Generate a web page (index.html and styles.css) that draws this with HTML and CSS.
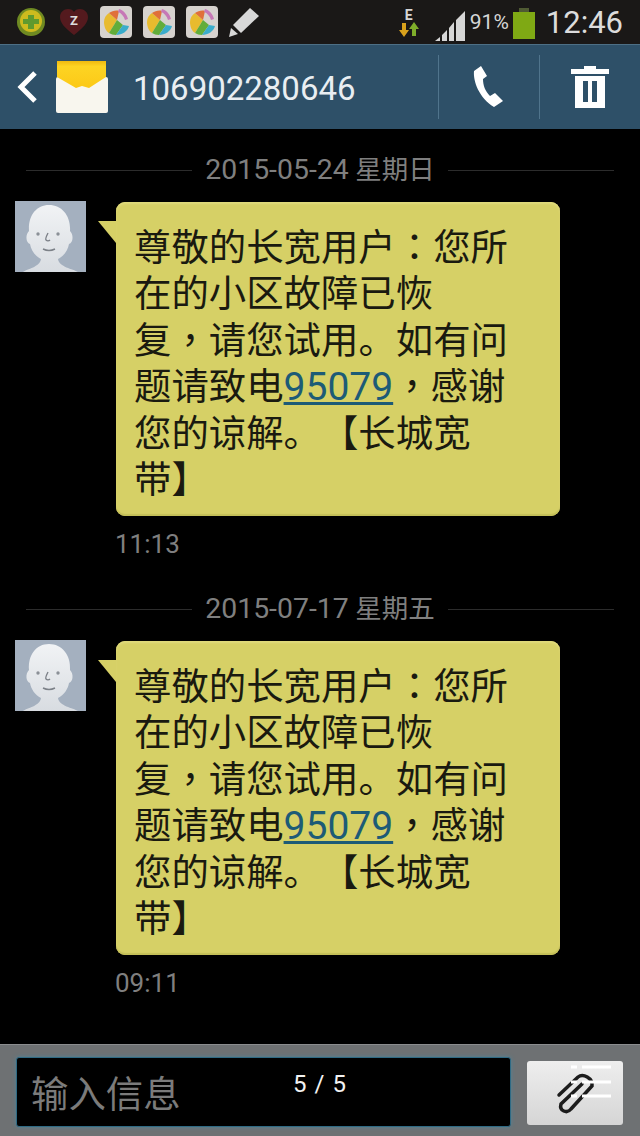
FILE: index.html
```html
<!DOCTYPE html>
<html lang="zh-CN">
<head>
<meta charset="UTF-8">
<title>106902280646</title>
<link rel="stylesheet" href="styles.css">
</head>
<body>
<div class="phone">

  <!-- status bar -->
  <div class="status-bar">
    <div class="notify-icons">
      <svg class="ico-plus" width="30" height="30" viewBox="0 0 30 30"><circle cx="15" cy="15" r="14" fill="#6f8a22"/><circle cx="15" cy="14" r="11" fill="#cdbb1e"/><path d="M12 8h6v4h5v5h-5v5h-6v-5H7v-5h5z" fill="#5f9a2e"/></svg>
      <svg class="ico-heart" width="30" height="28" viewBox="0 0 30 28"><path d="M15 27C6 20 1 15 1 9c0-5 4-8 8-8 3 0 5 1 6 3 1-2 3-3 6-3 4 0 8 3 8 8 0 6-5 11-14 18z" fill="#541a1e"/><text x="15" y="17" class="heart-z">Z</text></svg>
      <svg class="ico-app" width="32" height="32" viewBox="0 0 32 32"><use href="#appicon"/></svg>
      <svg class="ico-app" width="32" height="32" viewBox="0 0 32 32"><use href="#appicon"/></svg>
      <svg class="ico-app" width="32" height="32" viewBox="0 0 32 32"><use href="#appicon"/></svg>
      <svg class="ico-pen" width="30" height="30" viewBox="0 0 30 30"><path d="M21 1l9 8-18 17-8-8z" fill="#d8d8d8"/><path d="M2 21l7 6-9 3z" fill="#d8d8d8"/></svg>
    </div>
    <div class="status-right">
      <div class="net-type">
        <span class="net-e">E</span>
        <svg width="20" height="15" viewBox="0 0 20 15"><path d="M3 1h4v7h3l-5 7-5-7h3z" fill="#d9a21c"/><path d="M13 14h4V7h3l-5-7-5 7h3z" fill="#7fae2a"/></svg>
      </div>
      <svg class="signal" width="30" height="30" viewBox="0 0 30 30"><path d="M0 30l5-4v4zM7 24l5-5v11H7zM14 17l5-6v19h-5zM21 9l9-9v30h-9z" fill="#d6d6d6"/></svg>
      <span class="pct">91%</span>
      <div class="battery"><div class="battery-cap"></div><div class="battery-body"></div></div>
      <span class="clock">12:46</span>
    </div>
  </div>

  <!-- action bar -->
  <div class="action-bar">
    <svg class="back" width="20" height="34" viewBox="0 0 20 34"><path d="M18 3L4 17l14 14" fill="none" stroke="#fff" stroke-width="5"/></svg>
    <svg class="envelope" width="52" height="52" viewBox="0 0 52 52">
      <defs><linearGradient id="flap" x1="0" y1="0" x2="0" y2="1"><stop offset="0" stop-color="#f0b90f"/><stop offset="0.2" stop-color="#fdd423"/><stop offset="1" stop-color="#fcc917"/></linearGradient></defs>
      <rect x="0" y="16" width="52" height="36" rx="2" fill="#f8f6ee"/>
      <path d="M1 16V0h49v16L33 27l-7-2-6 2z" fill="url(#flap)"/>
    </svg>
    <div class="contact">106902280646</div>
    <div class="action-btn">
      <svg width="32" height="42" viewBox="0 0 32 42"><path d="M8 0L1 5c-1 10 5 27 20 36l9-6-8-8-5 3C12 25 10 19 10 13l4-3z" fill="#fff"/></svg>
    </div>
    <div class="action-btn">
      <svg width="38" height="42" viewBox="0 0 38 42"><path d="M13 0h12v3h13v5H0V3h13z" fill="#fff"/><path d="M4 10h30v32H4zM12 15v21h5V15zM21 15v21h5V15z" fill="#fff" fill-rule="evenodd"/></svg>
    </div>
  </div>

  <!-- messages -->
  <div class="thread">
    <div class="date-row"><span class="date-line"></span><span class="date-text"><span class="date-num">2015-05-24</span> 星期日</span><span class="date-line"></span></div>
    <div class="msg">
      <svg class="avatar" width="71" height="71" viewBox="0 0 71 71"><use href="#face"/></svg>
      <div class="bubble">
        <span class="tail"></span>
        尊敬的长宽用户<span class="mid" lang="zh-TW">：</span>您所<br>在的小区故障已恢<br>复<span class="mid" lang="zh-TW">，</span>请您试用。如有问<br>题请致电<a class="tel">95079</a><span class="mid" lang="zh-TW">，</span>感谢<br>您的谅解。【长城宽<br>带】
      </div>
    </div>
    <div class="msg-time">11:13</div>

    <div class="date-row"><span class="date-line"></span><span class="date-text"><span class="date-num">2015-07-17</span> 星期五</span><span class="date-line"></span></div>
    <div class="msg">
      <svg class="avatar" width="71" height="71" viewBox="0 0 71 71"><use href="#face"/></svg>
      <div class="bubble">
        <span class="tail"></span>
        尊敬的长宽用户<span class="mid" lang="zh-TW">：</span>您所<br>在的小区故障已恢<br>复<span class="mid" lang="zh-TW">，</span>请您试用。如有问<br>题请致电<a class="tel">95079</a><span class="mid" lang="zh-TW">，</span>感谢<br>您的谅解。【长城宽<br>带】
      </div>
    </div>
    <div class="msg-time">09:11</div>
  </div>

  <!-- input -->
  <div class="compose">
    <div class="input-box">输入信息</div>
    <div class="attach">
      <svg width="96" height="64" viewBox="0 0 96 64"><path d="M32 34L51 16c5-4 15 1 14 9L44 48c-4 5-12 2-10-5l21-20" fill="none" stroke="#1c1c1c" stroke-width="3.5" stroke-linecap="round"/><path d="M44 6h6M55 6h29M44 21h6M55 21h29M44 35h6M55 35h29" stroke="#fff" stroke-width="3"/></svg>
    </div>
    <div class="page-count">5 / 5</div>
  </div>
</div>

<!-- shared icons -->
<svg class="defs" width="0" height="0">
  <defs>
    <g id="appicon">
      <rect width="32" height="32" rx="4" fill="#d6d2ce"/>
      <path d="M4 16C4 12 6 9 9 7l8 7-8 13c-3-2-5-6-5-11z" fill="#e8bb2e"/>
      <path d="M9 7c3-2 7-3 10-2l-2 9z" fill="#e0703a"/>
      <path d="M9 27l8-13 6 5-7 10c-3 0-5-1-7-2z" fill="#62ad3a"/>
      <path d="M16 29l7-10 6 1c-1 5-7 9-13 9z" fill="#3aaccb"/>
      <path d="M19 3c4 1 8 5 9 10l-3 1c-1-4-4-7-7-8z" fill="#c678b6"/>
    </g>
    <linearGradient id="faceShade" x1="0" y1="0" x2="0" y2="1">
      <stop offset="0" stop-color="#f1f3f5"/>
      <stop offset="1" stop-color="#d8dce1"/>
    </linearGradient>
    <g id="face">
      <rect width="71" height="71" fill="#a4b0bf"/>
      <path d="M8 71c4-3 17-5 18-13-6-3-10-9-11-15-4-1-5-9-1-13C13 15 21 4 34 4s22 11 21 26c4 4 3 12-1 13-1 6-5 12-11 15 1 8 15 10 20 13z" fill="url(#faceShade)"/>
      <circle cx="23" cy="33" r="1.7" fill="#8b9097"/>
      <circle cx="43" cy="33" r="1.7" fill="#8b9097"/>
      <path d="M33 32c-2 4-3 6-2 7s3 1 4 0M28 48c4 2 8 2 12 0" fill="none" stroke="#7c8188" stroke-width="1.4"/>
    </g>
  </defs>
</svg>
</body>
</html>
```

FILE: styles.css
```css
* {
  box-sizing: border-box;
}
body {
  margin: 0;
  background: #000;
  font-family: "Roboto", "Noto Sans CJK SC", sans-serif;
}
.phone {
  width: 640px;
  height: 1136px;
  display: flex;
  flex-direction: column;
  overflow: hidden;
}
.defs {
  position: absolute;
}

/* status bar */
.status-bar {
  height: 44px;
  background: #1a1817;
  display: flex;
  justify-content: space-between;
  align-items: center;
  padding: 0 17px 0 16px;
}
.notify-icons {
  display: flex;
  align-items: center;
}
.ico-heart {
  margin-left: 13px;
}
.ico-app {
  margin-left: 11px;
}
.ico-pen {
  margin-left: 11px;
}
.status-right {
  display: flex;
  align-items: center;
}
.net-type {
  width: 20px;
  display: flex;
  flex-direction: column;
  align-items: center;
  margin-right: 16px;
}
.net-e {
  font-size: 14px;
  line-height: 14px;
  font-weight: 700;
  color: #d6d6d6;
}
.signal {
  margin: 8px 5px 0 0;
}
.pct {
  font-size: 21px;
  color: #d6d6d6;
  margin-right: 4px;
}
.battery {
  width: 22px;
  display: flex;
  flex-direction: column;
  align-items: center;
  margin: 3px 11px 0 0;
}
.battery-cap {
  width: 10px;
  height: 4px;
  background: #4f5a33;
}
.battery-body {
  width: 22px;
  height: 27px;
  background: #7fa914;
}
.clock {
  font-size: 31px;
  color: #dcdcdc;
}
.heart-z {
  font-size: 13px;
  font-weight: 700;
  fill: #ddd;
  text-anchor: middle;
}

/* action bar */
.action-bar {
  height: 85px;
  background: #2e5068;
  border-top: 1px solid #4d6f85;
  display: flex;
  align-items: center;
  padding-left: 17px;
}
.back {
  flex: none;
}
.envelope {
  margin-left: 19px;
  flex: none;
}
.contact {
  flex: 1;
  margin-left: 25px;
  padding-top: 2px;
  font-size: 33px;
  color: #e9eef2;
}
.action-btn {
  width: 101px;
  height: 64px;
  border-left: 1px solid #50748c;
  display: flex;
  align-items: center;
  justify-content: center;
}

/* messages */
.thread {
  flex: 1;
  background: #000;
  padding-top: 23px;
}
.date-row {
  display: flex;
  align-items: center;
  height: 36px;
  padding: 0 26px;
}
.date-line {
  flex: 1;
  height: 1px;
  background: #2c2c2c;
}
.date-text {
  margin: 0 13px;
  font-size: 26.5px;
  line-height: 30px;
  color: #7f7f7f;
}
.date-num {
  font-size: 28.4px;
}
.msg {
  display: flex;
  align-items: flex-start;
  margin-top: 13px;
  padding-left: 15px;
}
.avatar {
  flex: none;
}
.bubble {
  position: relative;
  width: 444px;
  height: 314px;
  margin: 1px 0 0 30px;
  padding: 23px 10px 0 18px;
  background: #d6d066;
  border-radius: 9px;
  box-shadow: inset 0 2px 2px #e0da7c, inset 0 -2px 1px #c4bf58;
  font-size: 37.4px;
  line-height: 46.4px;
  color: #1a1a10;
  text-spacing-trim: space-all;
}
.mid {
  font-family: "Roboto", "Noto Sans CJK TC", sans-serif;
}
.tail {
  position: absolute;
  left: -18px;
  top: 19px;
  width: 0;
  height: 0;
  border-right: 18px solid #d6d066;
  border-bottom: 22px solid transparent;
}
.tel {
  color: #1d5b76;
  font-size: 39px;
  text-decoration: underline;
}
.msg-time {
  margin: 13px 0 32px 115px;
  font-size: 26px;
  line-height: 30px;
  color: #7f7f7f;
}

/* compose */
.compose {
  position: relative;
  height: 92px;
  padding: 3px 16px 0;
  background: #6e7173;
  border-top: 1px solid #8b8d8f;
  display: flex;
  align-items: center;
}
.input-box {
  width: 495px;
  height: 70px;
  background: #000;
  border: 1px solid #2f6a84;
  border-radius: 3px;
  box-shadow: 0 0 4px #4f8398;
  padding: 6px 0 0 14px;
  font-size: 37.4px;
  line-height: 62px;
  color: #7b7b7b;
}
.attach {
  width: 96px;
  height: 64px;
  margin: 2px 0 0 16px;
  background: linear-gradient(#eeeeee, #d5d5d5);
  border-radius: 3px;
}
.page-count {
  position: absolute;
  left: 0;
  right: 0;
  top: 25px;
  text-align: center;
  font-size: 24px;
  letter-spacing: 1px;
  color: #f2f2f2;
}
```
